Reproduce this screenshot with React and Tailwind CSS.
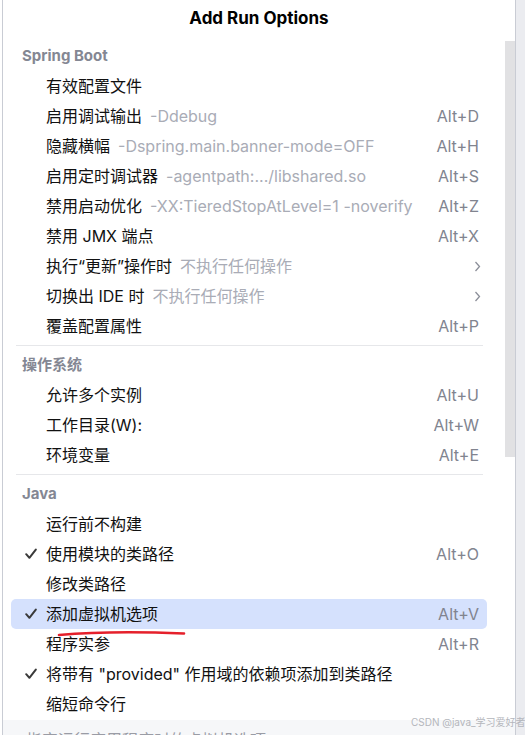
import React from "react";

const Check = () => (
  <svg width="12" height="12" viewBox="0 0 12 12" className="absolute left-[14px] top-1/2 -translate-y-1/2">
    <path d="M1.2 6.2 L4.4 9.8 L10.8 1.6" fill="none" stroke="#3a3a3a" strokeWidth="2" strokeLinecap="round" strokeLinejoin="round" />
  </svg>
);

const Chevron = () => (
  <svg width="7" height="11" viewBox="0 0 7 11" className="mr-[-2px]">
    <path d="M1.5 1 L5.5 5.5 L1.5 10" fill="none" stroke="#8c8f99" strokeWidth="1.3" />
  </svg>
);

const Header = ({ children }) => (
  <div className="h-[30px] flex items-center pl-[19px] text-[15px] font-bold text-[#848793]">{children}</div>
);

const Sep = () => (
  <div className="h-[9px] flex items-center ml-[13px] mr-[22px]">
    <div className="h-px w-full bg-[#e6e7ea]" />
  </div>
);

const Item = ({ label, hint, shortcut, chevron, checked, active }) => (
  <div
    className={
      "relative h-[30px] ml-[8px] mr-[18px] pl-[35px] pr-[8px] flex items-center rounded-[5px] " +
      (active ? "bg-[#d5e1fd]" : "")
    }
  >
    {checked && <Check />}
    <span className="text-[#111111] whitespace-nowrap">{label}</span>
    {hint && <span className="ml-[8px] text-[#a9acb6] whitespace-nowrap">{hint}</span>}
    <span className="flex-1" />
    {shortcut && <span className="text-[#81848f] whitespace-nowrap">{shortcut}</span>}
    {chevron && <Chevron />}
  </div>
);

export default function App() {
  return (
    <div
      className="relative w-[525px] h-[735px] overflow-hidden flex bg-white text-[16px] leading-[20px]"
      style={{ fontFamily: '"Inter", "Noto Sans CJK SC", sans-serif' }}
    >
      <div className="w-[2px] bg-white" />
      <div className="w-[514px] h-full flex flex-col bg-white border-l border-r border-[#c9ccd4]">
        <div className="h-[41px] shrink-0 flex items-center justify-center pb-[5px] text-[17px] font-bold text-black">
          Add Run Options
        </div>
        <div className="h-[679px] shrink-0 flex">
          <div className="flex-1 flex flex-col">
            <Header>Spring Boot</Header>
            <Item label="有效配置文件" />
            <Item label="启用调试输出" hint="-Ddebug" shortcut="Alt+D" />
            <Item label="隐藏横幅" hint="-Dspring.main.banner-mode=OFF" shortcut="Alt+H" />
            <Item label="启用定时调试器" hint="-agentpath:.../libshared.so" shortcut="Alt+S" />
            <Item label="禁用启动优化" hint="-XX:TieredStopAtLevel=1 -noverify" shortcut="Alt+Z" />
            <Item label="禁用 JMX 端点" shortcut="Alt+X" />
            <Item label="执行“更新”操作时" hint="不执行任何操作" chevron />
            <Item label="切换出 IDE 时" hint="不执行任何操作" chevron />
            <Item label="覆盖配置属性" shortcut="Alt+P" />
            <Sep />
            <Header>操作系统</Header>
            <Item label="允许多个实例" shortcut="Alt+U" />
            <Item label="工作目录(W):" shortcut="Alt+W" />
            <Item label="环境变量" shortcut="Alt+E" />
            <Sep />
            <Header>Java</Header>
            <Item label="运行前不构建" />
            <Item label="使用模块的类路径" shortcut="Alt+O" checked />
            <Item label="修改类路径" />
            <Item label="添加虚拟机选项" shortcut="Alt+V" checked active />
            <Item label="程序实参" shortcut="Alt+R" />
            <Item label={'将带有 "provided" 作用域的依赖项添加到类路径'} checked />
            <Item label="缩短命令行" />
          </div>
          <div className="w-[10px] shrink-0">
            <div className="h-[416px] bg-[#e1e1e3]" />
          </div>
        </div>
        <div className="flex-1 bg-[#f6f7f9] pl-[23px] pt-[10px] text-[#9a9ca5] whitespace-nowrap">
          指定运行应用程序时的虚拟机选项
        </div>
      </div>
      <div className="flex-1 bg-[#ebecf0]" />

      <svg className="absolute left-0 top-0 pointer-events-none" width="525" height="735">
        <path d="M59 635 Q 110 630.5 184 633.5" fill="none" stroke="#e5202b" strokeWidth="2.6" strokeLinecap="round" />
      </svg>
      <div className="absolute left-[411px] top-[715px] text-[10px] leading-[14px] text-[#b4b6bc] whitespace-nowrap">
        CSDN @java_学习爱好者
      </div>
    </div>
  );
}
